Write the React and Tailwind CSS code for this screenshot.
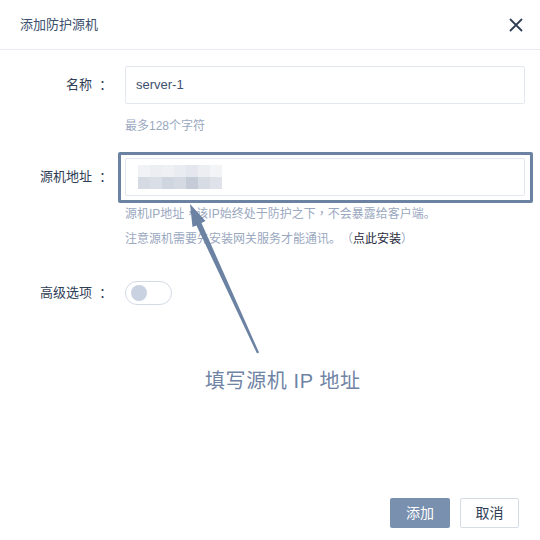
import React from "react";

const FONT = { fontFamily: '"Liberation Sans", "Noto Sans CJK SC", sans-serif' };
const TC = { fontFamily: '"Noto Sans CJK TC", sans-serif' };

const mosaicTop = ["#f1f2f5", "#eceef2", "#eef0f3", "#e9ecf0", "#e4e7ed", "#eceef2", "#f3f4f6"];
const mosaicBottom = ["#d5dae3", "#dadee6", "#d0d6df", "#d4d9e2", "#c5ccd8", "#d7dce4", "#dfe2e8"];

function Label({ text, h }) {
  return (
    <div className={`w-[113px] ${h} flex items-center justify-end text-[13px] text-[#2f3d55]`}>
      <span>{text}</span>
      <span className="inline-block w-[21px] text-center" style={TC}>：</span>
    </div>
  );
}

export default function App() {
  return (
    <div className="relative w-[540px] h-[540px] bg-white overflow-hidden flex flex-col text-[#2f3d55] [text-spacing-trim:space-all]" style={FONT}>
      {/* Header */}
      <div className="h-[50px] flex items-center justify-between pl-5 pr-[17px] border-b border-[#e8ebf2] shrink-0">
        <span className="text-[13px] text-[#3d4f6e]">添加防护源机</span>
        <svg width="14" height="14" viewBox="0 0 14 14" className="text-[#2f3d55]">
          <path d="M1.5 1.5 L12.5 12.5 M12.5 1.5 L1.5 12.5" stroke="currentColor" strokeWidth="1.8" strokeLinecap="round" />
        </svg>
      </div>

      {/* Body */}
      <div className="pt-4 flex flex-col">
        {/* Row 1 */}
        <div className="flex gap-3">
          <Label text="名称" h="h-[38px]" />
          <div className="w-[400px] flex flex-col">
            <div className="h-[38px] border border-[#e3e7ef] rounded-[2px] flex items-center pl-[10px] text-[13px] text-[#3d4f6e]">
              server-1
            </div>
            <div className="mt-[13px] text-[12px] leading-[18px] text-[#9aa8c0]">最多128个字符</div>
          </div>
        </div>

        {/* Row 2 */}
        <div className="flex gap-3 mt-[23px]">
          <Label text="源机地址" h="h-[38px]" />
          <div className="w-[400px] flex flex-col">
            <div className="h-[38px] border border-[#e3e7ef] rounded-[2px] flex items-center pl-[12px]">
              <div className="flex flex-col blur-[0.6px]">
                <div className="flex">
                  {mosaicTop.map((c, i) => (
                    <div key={i} className="w-[12px] h-[12px]" style={{ background: c }} />
                  ))}
                </div>
                <div className="flex">
                  {mosaicBottom.map((c, i) => (
                    <div key={i} className="w-[12px] h-[12px]" style={{ background: c }} />
                  ))}
                </div>
              </div>
            </div>
            <div className="mt-[5px] text-[12px] leading-6 text-[#9aa8c0]">
              <div>
                源机IP地址<span style={TC}>，</span>该IP始终处于防护之下<span style={TC}>，</span>不会暴露给客户端。
              </div>
              <div>
                注意源机需要先安装网关服务才能通讯。<span style={TC}>（</span>
                <span className="text-[#1f2a3c]">点此安装</span>
                <span style={TC}>）</span>
              </div>
            </div>
          </div>
        </div>

        {/* Row 3 */}
        <div className="flex gap-3 mt-[30px]">
          <Label text="高级选项" h="h-[24px]" />
          <div className="w-[47px] h-[24px] rounded-full border border-[#d3dae6] bg-white flex items-center pl-[5px]">
            <div className="w-[16px] h-[16px] rounded-full bg-[#c9d2e0]" />
          </div>
        </div>
      </div>

      {/* Footer */}
      <div className="mt-auto flex justify-end gap-[10px] pr-[21px] pb-3">
        <button className="w-[60px] h-[30px] rounded-[2px] bg-[#7990af] text-white text-[14px]">添加</button>
        <button className="w-[59px] h-[30px] rounded-[2px] bg-white border border-[#d5dce6] text-[#2f3d55] text-[14px]">取消</button>
      </div>

      {/* Annotation overlay */}
      <div className="absolute left-[118px] top-[152px] w-[415px] h-[51px] border-[3px] border-[#6b82a3] rounded-[2px] pointer-events-none" />
      <svg className="absolute left-0 top-0 pointer-events-none" width="540" height="540" viewBox="0 0 540 540">
        <polygon
          points="190,204 205.5,221 201.5,223 259,352.5 257,353.5 196.5,225.5 192.5,227"
          fill="#6b82a3"
        />
      </svg>
      <div className="absolute left-[205px] top-[367px] text-[20px] leading-[28px] tracking-[0.6px] text-[#6f84a4] pointer-events-none">
        填写源机 IP 地址
      </div>
    </div>
  );
}
